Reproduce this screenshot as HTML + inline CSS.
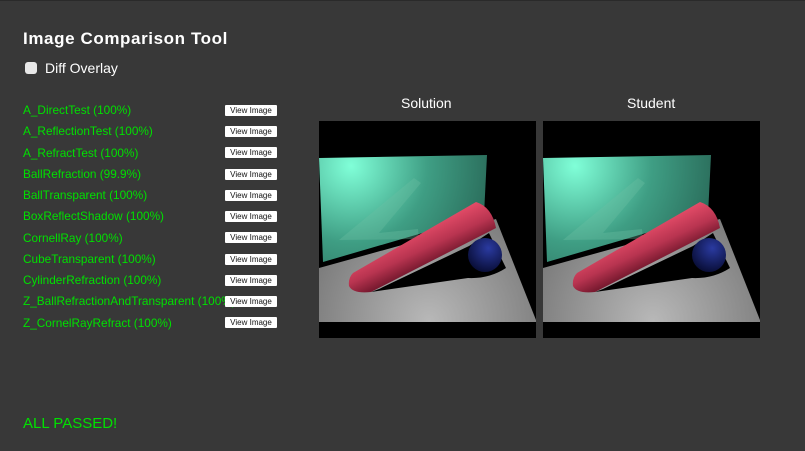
<!DOCTYPE html>
<html><head><meta charset="utf-8"><style>
html,body{margin:0;padding:0;}
body{width:805px;height:451px;background:#383838;position:relative;overflow:hidden;font-family:"Liberation Sans",sans-serif;border-top:1px solid #2a2a2a;box-sizing:border-box;}
.t{position:absolute;left:23px;top:28px;font-size:17px;font-weight:bold;color:#fff;letter-spacing:0.6px;}
.cb{position:absolute;left:25px;top:61px;width:12px;height:12px;background:#e8e8e8;border-radius:3px;}
.cbl{position:absolute;left:45px;top:59px;font-size:14px;color:#fff;}
.row{position:absolute;left:23px;font-size:11.8px;color:#00e000;white-space:nowrap;}
.btn{position:absolute;left:225px;width:52px;height:11px;background:#fff;color:#111;font-size:8px;line-height:11px;text-align:center;border-radius:1px;}
.hd{position:absolute;top:94px;font-size:14px;color:#fff;}
.img{position:absolute;top:120px;width:217px;height:217px;}
.ok{position:absolute;left:23px;top:414px;font-size:15px;color:#00e000;}
</style></head><body>
<div class="t">Image Comparison Tool</div>
<div class="cb"></div><div class="cbl">Diff Overlay</div>

<div class="row" style="top:102px">A_DirectTest (100%)</div><div class="btn" style="top:104px">View Image</div>
<div class="row" style="top:123px">A_ReflectionTest (100%)</div><div class="btn" style="top:125px">View Image</div>
<div class="row" style="top:145px">A_RefractTest (100%)</div><div class="btn" style="top:146px">View Image</div>
<div class="row" style="top:166px">BallRefraction (99.9%)</div><div class="btn" style="top:168px">View Image</div>
<div class="row" style="top:187px">BallTransparent (100%)</div><div class="btn" style="top:189px">View Image</div>
<div class="row" style="top:208px">BoxReflectShadow (100%)</div><div class="btn" style="top:210px">View Image</div>
<div class="row" style="top:230px">CornellRay (100%)</div><div class="btn" style="top:231px">View Image</div>
<div class="row" style="top:251px">CubeTransparent (100%)</div><div class="btn" style="top:253px">View Image</div>
<div class="row" style="top:272px">CylinderRefraction (100%)</div><div class="btn" style="top:274px">View Image</div>
<div class="row" style="top:293px">Z_BallRefractionAndTransparent (100%)</div><div class="btn" style="top:295px">View Image</div>
<div class="row" style="top:315px">Z_CornelRayRefract (100%)</div><div class="btn" style="top:316px">View Image</div>

<div class="hd" style="left:401px">Solution</div>
<div class="hd" style="left:627px">Student</div>

<svg width="0" height="0" style="position:absolute">
<defs>
<radialGradient id="gg" gradientUnits="userSpaceOnUse" cx="32" cy="45" r="170"><stop offset="0" stop-color="#80ffd8"/><stop offset="0.45" stop-color="#3f9e84"/><stop offset="1" stop-color="#22584a"/></radialGradient>
<radialGradient id="fl" gradientUnits="userSpaceOnUse" cx="110" cy="200" r="160"><stop offset="0" stop-color="#b8b8b8"/><stop offset="1" stop-color="#6a6a6a"/></radialGradient>
<linearGradient id="cy" gradientUnits="userSpaceOnUse" x1="90" y1="110" x2="106" y2="144"><stop offset="0" stop-color="#e84e6a"/><stop offset="0.6" stop-color="#b83450"/><stop offset="1" stop-color="#7a1a30"/></linearGradient>
<radialGradient id="bl" cx="0.6" cy="0.3" r="0.7"><stop offset="0" stop-color="#2a3aa0"/><stop offset="1" stop-color="#0a0f3a"/></radialGradient>
<g id="scene">
<rect width="217" height="217" fill="#000"/>
<polygon points="0,147 177,98 217,199 217,201 0,201" fill="url(#fl)"/>
<polygon points="0,37 168,34 165,94 4,141" fill="url(#gg)"/>
<polygon points="20,119 95,57 102,62 60,112 99,108 100,118" fill="#6cc0a4" opacity="0.35"/>
<path d="M60,168 L150,125 L170,112 L187,147 Q170,158 149,157 L52,171 Z" fill="#000"/>
<circle cx="166" cy="134" r="17" fill="url(#bl)"/>
<path d="M34,152 L157,81 Q173,86 177,107 L52,171 Q34,173 30,165 Q29,157 34,152 Z" fill="url(#cy)"/>
</g>
</defs></svg>
<svg class="img" style="left:319px" viewBox="0 0 217 217"><use href="#scene"/></svg>
<svg class="img" style="left:543px" viewBox="0 0 217 217"><use href="#scene"/></svg>

<div class="ok">ALL PASSED!</div>
</body></html>
